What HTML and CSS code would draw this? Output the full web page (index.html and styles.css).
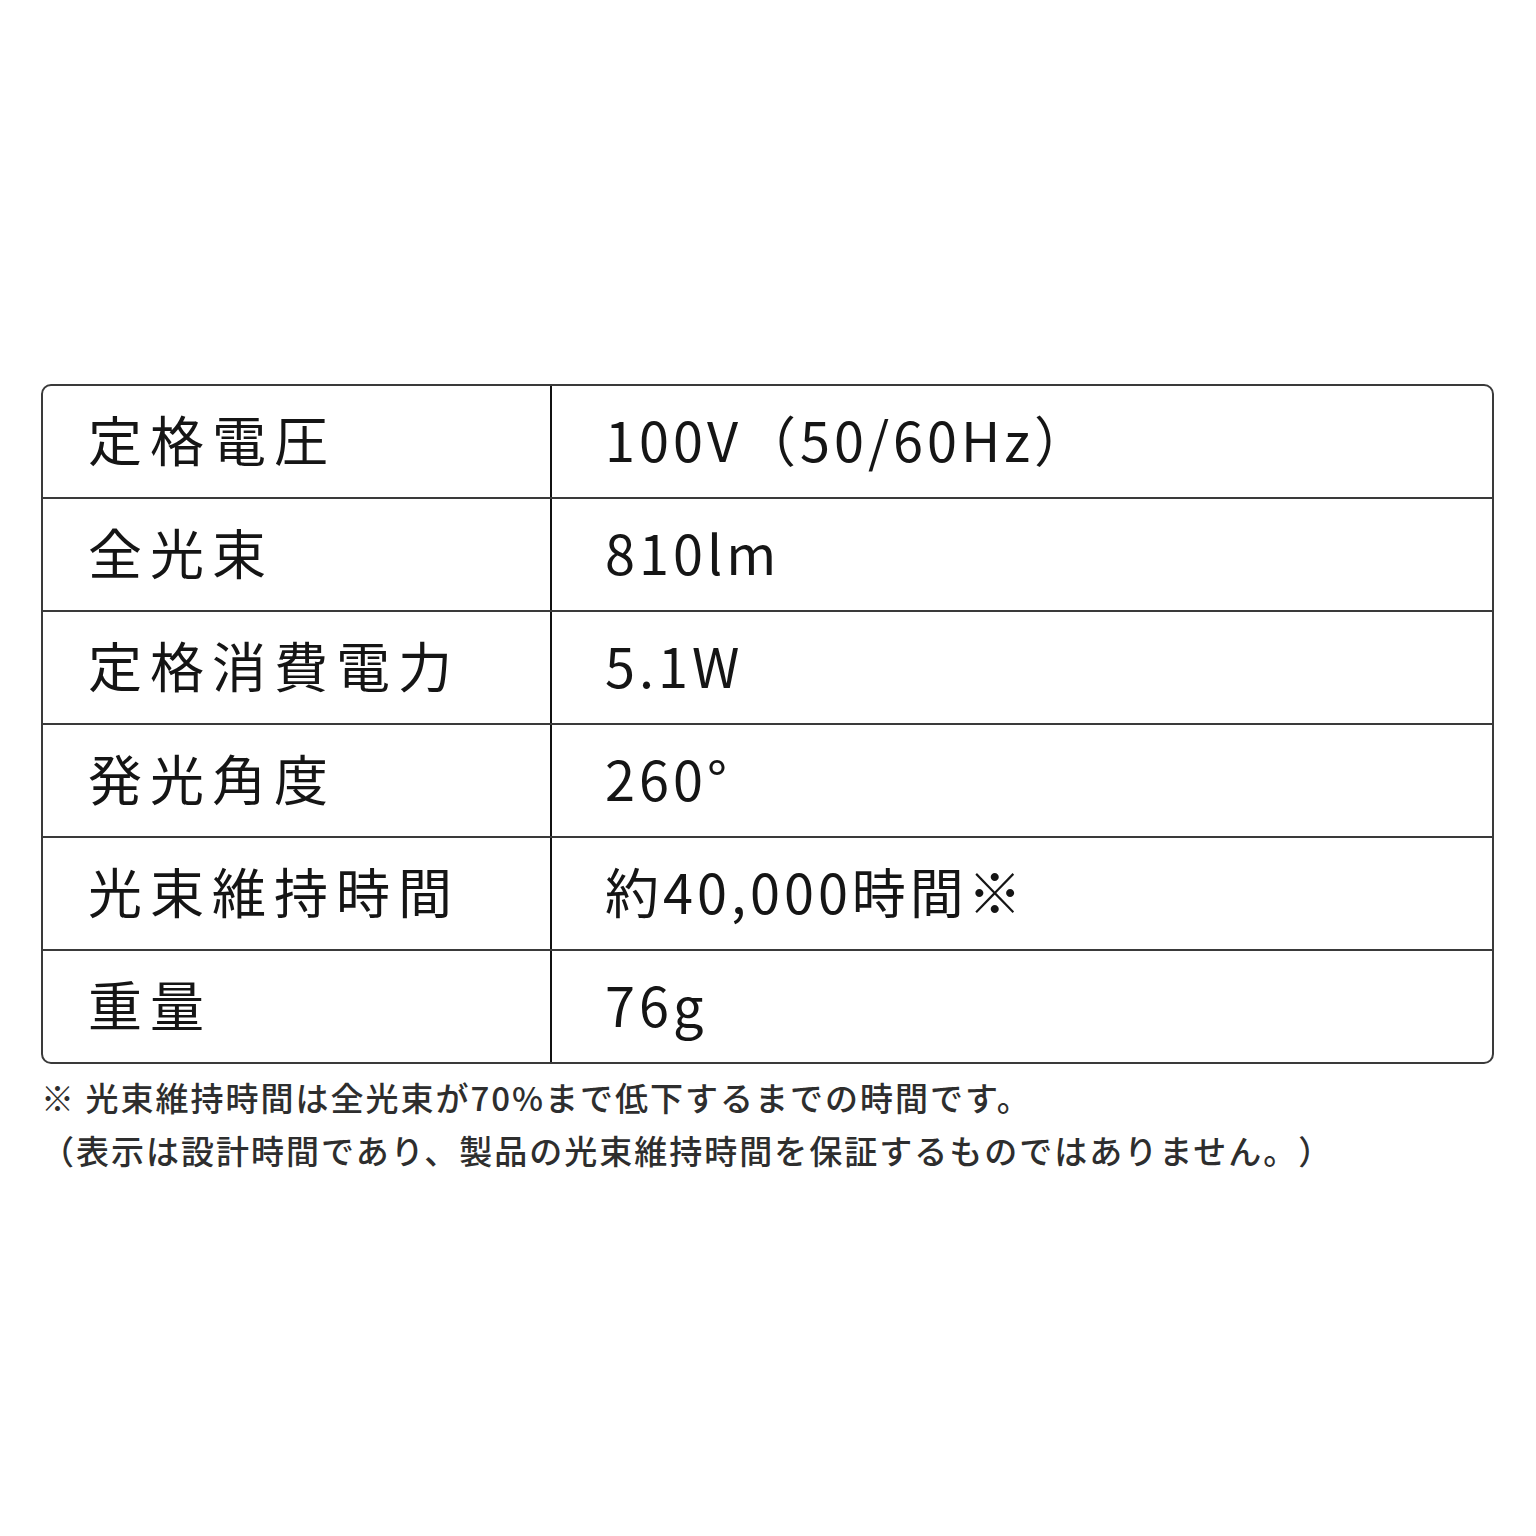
FILE: index.html
```html
<!DOCTYPE html>
<html lang="ja">
<head>
<meta charset="utf-8">
<title>仕様</title>
<link rel="stylesheet" href="styles.css">
</head>
<body>
<main class="page">
  <div class="spec">
    <div class="row"><div class="label">定格電圧</div><div class="value">100V（50/60Hz）</div></div>
    <div class="row"><div class="label">全光束</div><div class="value">810lm</div></div>
    <div class="row"><div class="label">定格消費電力</div><div class="value">5.1W</div></div>
    <div class="row"><div class="label">発光角度</div><div class="value">260°</div></div>
    <div class="row"><div class="label">光束維持時間</div><div class="value">約40,000時間※</div></div>
    <div class="row"><div class="label">重量</div><div class="value">76g</div></div>
  </div>
  <div class="note">
    <p>※ 光束維持時間は全光束が70%まで低下するまでの時間です。</p>
    <p>（表示は設計時間であり、製品の光束維持時間を保証するものではありません。）</p>
  </div>
</main>
</body>
</html>
```
FILE: styles.css
```css
html, body {
  margin: 0;
  padding: 0;
  background: #ffffff;
}
body {
  font-family: "Noto Sans CJK JP", "Noto Sans", sans-serif;
  color: #151515;
  text-spacing-trim: space-all;
}
.page {
  padding: 384px 42px 0 41px;
  width: 1453px;
}
.spec {
  border: 2px solid #3a3a3a;
  border-radius: 10px;
  overflow: hidden;
}
.row {
  display: grid;
  grid-template-columns: 509px 1fr;
  height: 111px;
}
.row + .row {
  border-top: 2px solid #3a3a3a;
}
.label, .value {
  display: flex;
  align-items: center;
  font-size: 54px;
  line-height: 1;
  padding-bottom: 6px;
}
.label {
  padding-left: 45px;
  letter-spacing: 8px;
  border-right: 2px solid #111111;
}
.value {
  padding-left: 53px;
  letter-spacing: 4px;
}
.note {
  margin-top: 7px;
  color: #2e2e2e;
  font-size: 33px;
  font-weight: 500;
  letter-spacing: 2px;
  line-height: 53px;
}
.note p {
  margin: 0;
  white-space: nowrap;
}
```
